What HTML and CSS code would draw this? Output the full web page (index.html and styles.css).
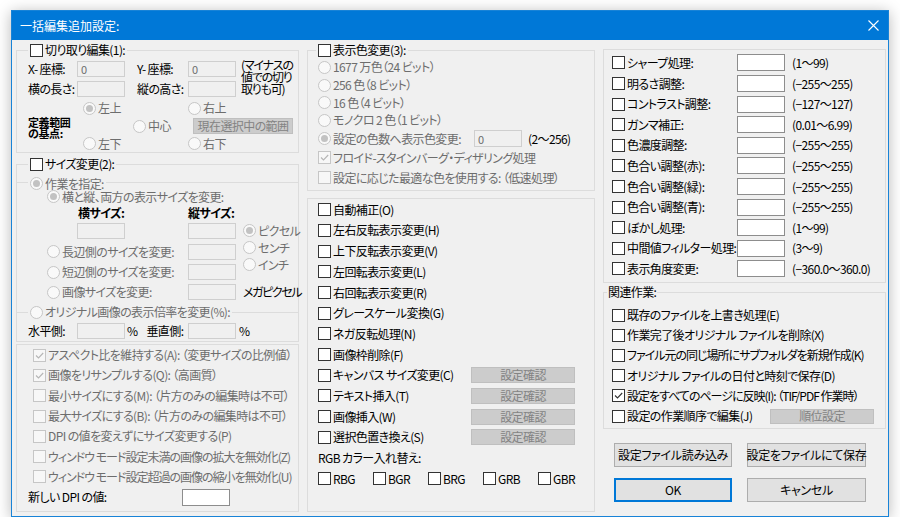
FILE: index.html
```html
<!DOCTYPE html>
<html lang="ja">
<head>
<meta charset="utf-8">
<title>一括編集追加設定</title>
<link rel="stylesheet" href="styles.css">
</head>
<body>
<div class="win">
  <div class="titlebar">
    <span class="title">一括編集追加設定:</span>
    <svg class="close" width="11" height="11" viewBox="0 0 11 11"><path d="M0.5 0.5L10.5 10.5M10.5 0.5L0.5 10.5"/></svg>
  </div>
  <div class="client">
    <!-- LEFT COLUMN -->
    <div class="col">
      <fieldset class="grp g-crop">
        <legend><span class="lg"><span class="cb"></span>切り取り編集(1):</span></legend>
        <div class="crop-grid">
          <span>X- 座標:</span><span class="tb off">0</span><span class="pl">Y- 座標:</span><span class="tb off">0</span>
          <span class="note">(マイナスの<br>値での切り<br>取りも可)</span>
          <span>横の長さ:</span><span class="tb off"></span><span class="pl">縦の高さ:</span><span class="tb off"></span>
        </div>
        <div class="base-grid">
          <span class="opt dis a-tl"><span class="rb off on"></span>左上</span>
          <span class="opt dis a-tr"><span class="rb off"></span>右上</span>
          <span class="blab a-lab">定義範囲<br>の基点:</span>
          <span class="opt dis a-c"><span class="rb off"></span>中心</span>
          <span class="btn off a-btn">現在選択中の範囲</span>
          <span class="opt dis a-bl"><span class="rb off"></span>左下</span>
          <span class="opt dis a-br"><span class="rb off"></span>右下</span>
        </div>
      </fieldset>

      <fieldset class="grp g-size">
        <legend><span class="lg"><span class="cb"></span>サイズ変更(2):</span></legend>
        <fieldset class="sub sub-work">
          <legend><span class="lg dis"><span class="rb off on"></span>作業を指定:</span></legend>
          <div class="work-grid">
            <span class="opt dis w-all"><span class="rb off on"></span>横と縦、両方の表示サイズを変更:</span>
            <span class="blab w-hl">横サイズ:</span>
            <span class="blab w-vl">縦サイズ:</span>
            <span class="w-in1"><span class="tb off"></span></span>
            <span class="w-in2"><span class="tb off"></span></span>
            <span class="units">
              <span class="opt dis"><span class="rb off on"></span>ピクセル</span>
              <span class="opt dis"><span class="rb off"></span>センチ</span>
              <span class="opt dis"><span class="rb off"></span>インチ</span>
            </span>
            <span class="opt dis w-long"><span class="rb off"></span>長辺側のサイズを変更:</span>
            <span class="w-in3"><span class="tb off"></span></span>
            <span class="opt dis w-short"><span class="rb off"></span>短辺側のサイズを変更:</span>
            <span class="w-in4"><span class="tb off"></span></span>
            <span class="opt dis w-img"><span class="rb off"></span>画像サイズを変更:</span>
            <span class="w-in5"><span class="tb off"></span></span>
            <span class="w-mp">メガピクセル</span>
          </div>
        </fieldset>
        <fieldset class="sub sub-ratio">
          <legend><span class="lg dis"><span class="rb off"></span>オリジナル画像の表示倍率を変更(%):</span></legend>
          <div class="ratio-grid">
            <span>水平側:</span><span class="tb off"></span><span class="pct">%<span class="vlab">垂直側:</span></span><span class="tb off"></span><span class="pct2">%</span>
          </div>
        </fieldset>
      </fieldset>

      <div class="box b-opts">
        <div class="row opt dis"><span class="cb off on"><svg class="ck" viewBox="0 0 11 11"><path d="M2 5.5l2.5 2.5L9.2 3"/></svg></span>アスペクト比を維持する(A): （変更サイズの比例値）</div>
        <div class="row opt dis"><span class="cb off on"><svg class="ck" viewBox="0 0 11 11"><path d="M2 5.5l2.5 2.5L9.2 3"/></svg></span>画像をリサンプルする(Q): （高画質）</div>
        <div class="row opt dis"><span class="cb off"></span>最小サイズにする(M): （片方のみの編集時は不可）</div>
        <div class="row opt dis"><span class="cb off"></span>最大サイズにする(B): （片方のみの編集時は不可）</div>
        <div class="row opt dis"><span class="cb off"></span>DPI の値を変えずにサイズ変更する(P)</div>
        <div class="row opt dis tight"><span class="cb off"></span>ウィンドウ モード設定未満の画像の拡大を無効化(Z)</div>
        <div class="row opt dis tight"><span class="cb off"></span>ウィンドウ モード設定超過の画像の縮小を無効化(U)</div>
        <div class="row dpi"><span class="dpi-lab">新しい DPI の値:</span><span class="tb"></span></div>
      </div>
    </div>

    <!-- MIDDLE COLUMN -->
    <div class="col">
      <fieldset class="grp g-color">
        <legend><span class="lg"><span class="cb"></span>表示色変更(3):</span></legend>
        <div class="row r-rad opt dis"><span class="rb off"></span>1677 万色（24 ビット）</div>
        <div class="row r-rad opt dis"><span class="rb off"></span>256 色（8 ビット）</div>
        <div class="row r-rad opt dis"><span class="rb off"></span>16 色（4 ビット）</div>
        <div class="row r-rad opt dis"><span class="rb off"></span>モノクロ 2 色（1 ビット）</div>
        <div class="row r-num"><span class="opt dis num-lab"><span class="rb off on"></span>設定の色数へ表示色変更:</span><span class="tb off">0</span><span class="rng">(2〜256)</span></div>
        <div class="row r-ck opt dis"><span class="cb off on"><svg class="ck" viewBox="0 0 11 11"><path d="M2 5.5l2.5 2.5L9.2 3"/></svg></span>フロイド-スタインバーグ・ディザリング処理</div>
        <div class="row r-ck opt dis"><span class="cb off"></span>設定に応じた最適な色を使用する: （低速処理）</div>
      </fieldset>

      <div class="box b-edit">
        <div class="row opt"><span class="cb"></span>自動補正(O)</div>
        <div class="row opt"><span class="cb"></span>左右反転表示変更(H)</div>
        <div class="row opt"><span class="cb"></span>上下反転表示変更(V)</div>
        <div class="row opt"><span class="cb"></span>左回転表示変更(L)</div>
        <div class="row opt"><span class="cb"></span>右回転表示変更(R)</div>
        <div class="row opt"><span class="cb"></span>グレースケール変換(G)</div>
        <div class="row opt"><span class="cb"></span>ネガ反転処理(N)</div>
        <div class="row opt"><span class="cb"></span>画像枠削除(F)</div>
        <div class="row"><span class="opt e-lab"><span class="cb"></span>キャンバス サイズ変更(C)</span><span class="btn off e-btn">設定確認</span></div>
        <div class="row"><span class="opt e-lab"><span class="cb"></span>テキスト挿入(T)</span><span class="btn off e-btn">設定確認</span></div>
        <div class="row"><span class="opt e-lab"><span class="cb"></span>画像挿入(W)</span><span class="btn off e-btn">設定確認</span></div>
        <div class="row"><span class="opt e-lab"><span class="cb"></span>選択色置き換え(S)</span><span class="btn off e-btn">設定確認</span></div>
        <div class="row">RGB カラー入れ替え:</div>
        <div class="row rgb">
          <span class="opt"><span class="cb"></span>RBG</span>
          <span class="opt"><span class="cb"></span>BGR</span>
          <span class="opt"><span class="cb"></span>BRG</span>
          <span class="opt"><span class="cb"></span>GRB</span>
          <span class="opt"><span class="cb"></span>GBR</span>
        </div>
      </div>
    </div>

    <!-- RIGHT COLUMN -->
    <div class="col">
      <div class="box b-adj">
        <div class="row"><span class="opt f-lab"><span class="cb"></span>シャープ処理:</span><span class="tb"></span><span class="rng">(1〜99)</span></div>
        <div class="row"><span class="opt f-lab"><span class="cb"></span>明るさ調整:</span><span class="tb"></span><span class="rng">(−255〜255)</span></div>
        <div class="row"><span class="opt f-lab"><span class="cb"></span>コントラスト調整:</span><span class="tb"></span><span class="rng">(−127〜127)</span></div>
        <div class="row"><span class="opt f-lab"><span class="cb"></span>ガンマ補正:</span><span class="tb"></span><span class="rng">(0.01〜6.99)</span></div>
        <div class="row"><span class="opt f-lab"><span class="cb"></span>色濃度調整:</span><span class="tb"></span><span class="rng">(−255〜255)</span></div>
        <div class="row"><span class="opt f-lab"><span class="cb"></span>色合い調整(赤):</span><span class="tb"></span><span class="rng">(−255〜255)</span></div>
        <div class="row"><span class="opt f-lab"><span class="cb"></span>色合い調整(緑):</span><span class="tb"></span><span class="rng">(−255〜255)</span></div>
        <div class="row"><span class="opt f-lab"><span class="cb"></span>色合い調整(青):</span><span class="tb"></span><span class="rng">(−255〜255)</span></div>
        <div class="row"><span class="opt f-lab"><span class="cb"></span>ぼかし処理:</span><span class="tb"></span><span class="rng">(1〜99)</span></div>
        <div class="row"><span class="opt f-lab"><span class="cb"></span>中間値フィルター処理:</span><span class="tb"></span><span class="rng">(3〜9)</span></div>
        <div class="row"><span class="opt f-lab"><span class="cb"></span>表示角度変更:</span><span class="tb"></span><span class="rng">(−360.0〜360.0)</span></div>
      </div>

      <fieldset class="grp g-rel">
        <legend><span class="lg plain">関連作業:</span></legend>
        <div class="row opt"><span class="cb"></span>既存のファイルを上書き処理(E)</div>
        <div class="row opt"><span class="cb"></span>作業完了後オリジナル ファイルを削除(X)</div>
        <div class="row opt tight"><span class="cb"></span>ファイル元の同じ場所にサブフォルダを新規作成(K)</div>
        <div class="row opt"><span class="cb"></span>オリジナル ファイルの日付と時刻で保存(D)</div>
        <div class="row opt tight"><span class="cb on"><svg class="ck" viewBox="0 0 11 11"><path d="M2 5.5l2.5 2.5L9.2 3"/></svg></span>設定をすべてのページに反映(I): （TIF/PDF 作業時）</div>
        <div class="row"><span class="opt g-lab"><span class="cb"></span>設定の作業順序で編集(J)</span><span class="btn off g-btn">順位設定</span></div>
      </fieldset>

      <div class="btns">
        <span class="btn">設定ファイル読み込み</span>
        <span class="btn">設定をファイルにて保存</span>
        <span class="btn def">OK</span>
        <span class="btn">キャンセル</span>
      </div>
    </div>
  </div>
</div>
</body>
</html>
```

FILE: styles.css
```css
* { box-sizing: border-box; }
html, body { margin: 0; padding: 0; }
body {
  background: #ffffff;
  font-family: "Noto Sans CJK JP", "Noto Sans", sans-serif;
  font-size: 12px;
  line-height: 14px;
  color: #000;
  font-feature-settings: "palt" 1;
  letter-spacing: -0.6px;
  white-space: nowrap;
}

.win {
  width: 878px;
  height: 507px;
  margin: 10px 0 0 11px;
  border: 1px solid #1883d7;
  background: #f0f0f0;
  box-shadow: 0 2px 14px rgba(0, 0, 0, 0.28);
  display: flex;
  flex-direction: column;
}
.titlebar {
  height: 29px;
  flex: none;
  background: #0078d7;
  color: #fff;
  display: flex;
  align-items: center;
  padding-left: 8px;
}
.title { font-size: 12px; letter-spacing: 0; }
.close { margin-left: auto; margin-right: 9px; }
.close path { stroke: #fff; stroke-width: 1.1; fill: none; }

.client {
  flex: 1;
  display: grid;
  grid-template-columns: 283px 288px 283px;
  column-gap: 8px;
  padding: 3px 2px 4px 4px;
  min-height: 0;
}
.col { display: flex; flex-direction: column; min-height: 0; }

/* group boxes */
fieldset { margin: 0; padding: 0; border: 1px solid #dcdcdc; min-width: 0; }
legend { padding: 0 2px; margin-left: 11px; height: 14px; }
.lg { display: inline-flex; align-items: center; gap: 2px; height: 14px; line-height: 14px; }
.box { border: 1px solid #dcdcdc; }

.row { display: flex; align-items: center; }
.opt { display: flex; align-items: center; gap: 2px; }
.dis { color: #6d6d6d; }
.blab { font-weight: bold; }
.tight { letter-spacing: -1px; }

/* checkbox / radio */
.cb {
  width: 13px; height: 13px; flex: none;
  border: 1px solid #333;
  background: #fff;
  display: inline-flex; align-items: center; justify-content: center;
}
.cb.off { border-color: #c6c6c6; background: #f7f7f7; }
.ck { width: 11px; height: 11px; }
.ck path { fill: none; stroke: #333; stroke-width: 1.1; }
.cb.off .ck path { stroke: #b5b5b5; }

.rb {
  width: 13px; height: 13px; flex: none;
  border: 1px solid #333; border-radius: 50%;
  background: #fff;
  display: inline-flex; align-items: center; justify-content: center;
}
.rb.off { border-color: #c6c6c6; background: #f9f9f9; }
.rb.on::after { content: ""; width: 7px; height: 7px; border-radius: 50%; background: #333; }
.rb.off.on::after { background: #c2c2c2; }

/* text boxes */
.tb {
  display: inline-flex; align-items: center;
  width: 48px; height: 17px; flex: none;
  border: 1px solid #8d8d8d;
  background: #fff;
  padding-left: 3px;
  font-size: 11px;
  color: #6d6d6d;
}
.tb.off { border-color: #cfcfcf; background: #f0f0f0; }

/* buttons */
.btn {
  display: inline-flex; align-items: center; justify-content: center;
  border: 1px solid #adadad;
  background: #e1e1e1;
}
.btn.off { background: #cccccc; border-color: #bfbfbf; color: #838383; }
.btn.def { border: 2px solid #0078d7; }

/* ---------- left column ---------- */
.g-crop { padding: 2px 0 0 11px; }
.g-crop > legend { margin-left: 0; }
.crop-grid {
  display: grid;
  grid-template-columns: 49px 48px 63px 48px auto;
  grid-template-rows: 20px 20px;
  align-items: center;
}
.crop-grid .tb { height: 16px; }
.pl { padding-left: 12px; }
.note { grid-row: span 2; align-self: start; padding-left: 5px; line-height: 12px; letter-spacing: -1.2px; }

.base-grid {
  display: grid;
  grid-template-columns: 55px 50px 55px auto;
  grid-template-rows: 18px 18px 17px;
  align-items: center;
}
.a-tl { grid-area: 1 / 2; }
.a-tr { grid-area: 1 / 4; }
.a-lab { grid-area: 2 / 1; align-self: start; font-size: 11px; line-height: 10.5px; letter-spacing: -0.4px; }
.a-c { grid-area: 2 / 3; }
.a-btn { grid-area: 2 / 4; margin-left: 5px; width: 100px; height: 16px; }
.a-bl { grid-area: 3 / 2; }
.a-br { grid-area: 3 / 4; }

.g-size { margin-top: 4px; padding: 0; }
.sub { border: 0; border-top: 1px solid #dcdcdc; }
.sub-work { margin-top: 4px; padding: 0 0 3px 30px; }
.sub-work > legend { margin-left: -19px; }
.work-grid {
  display: grid;
  grid-template-columns: 141px 48px auto;
  grid-template-rows: 15px 17px 20px 21px 20px 20px;
  align-items: center;
}
.w-all { grid-area: 1 / 1 / 2 / 4; }
.w-hl { grid-area: 2 / 1; padding-left: 31px; }
.w-vl { grid-area: 2 / 2; }
.w-in1 { grid-area: 3 / 1; padding-left: 30px; display: flex; }
.w-in2 { grid-area: 3 / 2; display: flex; }
.w-in3 { grid-area: 4 / 2; display: flex; }
.w-in4 { grid-area: 5 / 2; display: flex; }
.w-in5 { grid-area: 6 / 2; display: flex; }
.work-grid .tb { height: 16px; }
.units {
  grid-area: 3 / 3 / 6 / 4;
  align-self: start;
  display: flex; flex-direction: column;
  padding: 1px 0 0 7px;
}
.units .opt { height: 17px; }
.w-long { grid-area: 4 / 1; }
.w-short { grid-area: 5 / 1; }
.w-img { grid-area: 6 / 1; }
.w-mp { grid-area: 6 / 3; padding-left: 7px; letter-spacing: -1.4px; }

.sub-ratio { padding: 2px 0 1px 11px; }
.sub-ratio > legend { margin-left: 0; }
.ratio-grid {
  display: grid;
  grid-template-columns: 49px 48px 63px 48px auto;
  height: 19px;
  align-items: center;
}
.ratio-grid .tb { height: 16px; }
.pct { padding-left: 2px; }
.vlab { margin-left: 9px; }
.pct2 { padding-left: 3px; }

.b-opts { margin-top: 2px; flex: 1; padding: 0 0 0 16px; }
.b-opts .row { height: 20.3px; }
.dpi { margin-left: -5px; }
.dpi-lab { width: 154px; }

/* ---------- middle column ---------- */
.g-color { padding: 1.5px 0 2px 10px; }
.g-color > legend { margin-left: -2px; }
.r-rad { height: 17.7px; }
.r-num { height: 18.7px; }
.r-ck { height: 20px; }
.num-lab { width: 156px; }
.rng { margin-left: 7px; }
.r-num .rng { margin-left: 6px; }

.b-edit { margin-top: 7px; flex: 1; padding: 0.5px 0 0 10px; }
.b-edit .row { height: 20.7px; }
.e-lab { width: 153px; }
.e-btn { width: 104px; height: 16px; }
.rgb .opt { width: 55px; }

/* ---------- right column ---------- */
.b-adj { margin-top: 6px; height: 234px; padding: 2.7px 0 0 8px; flex: none; }
.b-adj .row { height: 20.6px; }
.f-lab { width: 125px; }

.g-rel { margin-top: 2px; padding: 6px 0 2px 8px; }
.g-rel > legend { margin-left: -5px; padding: 0 1px; }
.g-rel .row { height: 20.2px; }
.g-lab { width: 158px; }
.g-btn { width: 104px; height: 15px; }

.btns {
  margin-top: 14px;
  display: grid;
  grid-template-columns: 118px 119px;
  column-gap: 15px;
  row-gap: 11px;
  padding-left: 11px;
}
.btns .btn { height: 24px; letter-spacing: -0.3px; }
```
